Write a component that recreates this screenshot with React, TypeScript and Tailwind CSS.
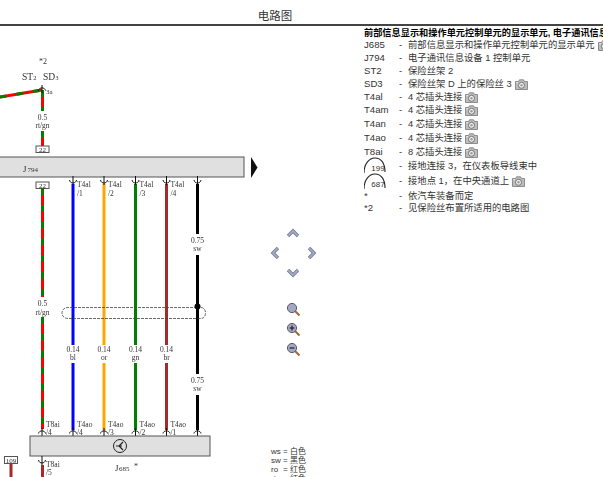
import React from "react";

const Camera = () => (
  <svg width="13" height="11" viewBox="0 0 13 11" className="inline-block ml-[3px] shrink-0">
    <path d="M0.5 2.5H3.5L4.5 0.8H8.5L9.5 2.5H12.5V10.5H0.5Z" fill="#bdbdbd" stroke="#777" strokeWidth="0.8" />
    <rect x="1.2" y="3.2" width="1.8" height="1" fill="#eee" />
    <circle cx="6.5" cy="6.3" r="3" fill="#f2f2f2" stroke="#666" strokeWidth="0.9" />
    <circle cx="6.5" cy="6.3" r="1.2" fill="#999" />
  </svg>
);

type Row = { label: React.ReactNode; text: string; cam?: boolean; h: string };

const Ground = ({ n }: { n: string }) => (
  <svg width="24" height="24" viewBox="0 0 24 24" className="overflow-visible block">
    <path d="M0 20C0 11 5 5 11 5C17 5 21 10 21 19" fill="none" stroke="#222" strokeWidth="1.1" />
    <text x="14" y="18" textAnchor="middle" fontSize="8" fill="#333" fontFamily="'Liberation Sans',sans-serif">{n}</text>
  </svg>
);

const rows: Row[] = [
  { label: "J685", text: "前部信息显示和操作单元控制单元的显示单元", cam: true, h: "h-[14px]" },
  { label: "J794", text: "电子通讯信息设备 1 控制单元", h: "h-[13px]" },
  { label: "ST2", text: "保险丝架 2", h: "h-[13px]" },
  { label: "SD3", text: "保险丝架 D 上的保险丝 3", cam: true, h: "h-[13px]" },
  { label: "T4al", text: "4 芯插头连接", cam: true, h: "h-[13px]" },
  { label: "T4am", text: "4 芯插头连接", cam: true, h: "h-[13px]" },
  { label: "T4an", text: "4 芯插头连接", cam: true, h: "h-[14px]" },
  { label: "T4ao", text: "4 芯插头连接", cam: true, h: "h-[14px]" },
  { label: "T8ai", text: "8 芯插头连接", cam: true, h: "h-[14px]" },
  { label: <Ground n="199" />, text: "接地连接 3，在仪表板导线束中", h: "h-[14px]" },
  { label: <Ground n="687" />, text: "接地点 1，在中央通道上", cam: true, h: "h-[17px]" },
  { label: "*", text: "依汽车装备而定", h: "h-[12px]" },
  { label: "*2", text: "见保险丝布置所适用的电路图", h: "h-[12px]" },
];

const Fork = ({ x, y }: { x: number; y: number }) => (
  <g fill="none" stroke="#111" strokeWidth="1">
    <path d={`M${x} ${y - 4}V${y + 4}`} />
    <path d={`M${x - 3.5} ${y + 1.5}C${x - 3} ${y - 2} ${x + 3} ${y - 2} ${x + 3.5} ${y + 1.5}`} />
  </g>
);
const ForkDown = ({ x, y }: { x: number; y: number }) => (
  <g fill="none" stroke="#111" strokeWidth="1">
    <path d={`M${x} ${y - 5}V${y + 4}`} />
    <path d={`M${x - 3.5} ${y - 1}C${x - 3} ${y + 3} ${x + 3} ${y + 3} ${x + 3.5} ${y - 1}`} />
  </g>
);

const Striped = ({ d }: { d: string }) => (
  <>
    <path d={d} stroke="#ff0000" strokeWidth="3" fill="none" />
    <path d={d} stroke="#008000" strokeWidth="3" fill="none" strokeDasharray="6.7 10" />
  </>
);

const Label = ({ x, y, children, anchor = "middle", size = 8 }: { x: number; y: number; children: React.ReactNode; anchor?: "middle" | "start"; size?: number }) => (
  <text x={x} y={y} textAnchor={anchor} fontSize={size} fill="#333" fontFamily="'Liberation Serif',serif">{children}</text>
);

const Conn = ({ x, y, n }: { x: number; y: number; n: string }) => (
  <g>
    <rect x={x - 6.5} y={y} width="13" height="6.5" fill="#fff" stroke="#555" strokeWidth="1" />
    <Label x={x} y={y + 6} size={7}>{n}</Label>
  </g>
);

const Diagram = () => {
  const wires = [
    { x: 73, c: "#0000ff", t: "bl", top: "T4al", tn: "/1", bot: "T4ao", bn: "/4" },
    { x: 104, c: "#ffa500", t: "or", top: "T4al", tn: "/2", bot: "T4ao", bn: "/3" },
    { x: 135.5, c: "#008000", t: "gn", top: "T4al", tn: "/3", bot: "T4ao", bn: "/2" },
    { x: 166.5, c: "#a52a2a", t: "br", top: "T4al", tn: "/4", bot: "T4ao", bn: "/1" },
  ];
  return (
    <svg width="262" height="451" viewBox="0 26 262 451" className="block shrink-0 [will-change:transform]">
      <Label x={43} y={64} size={8}>*2</Label>
      <Label x={22} y={80} anchor="start" size={9.5}>ST</Label>
      <Label x={33.2} y={80} anchor="start" size={6.5}>2</Label>
      <Label x={43} y={80} anchor="start" size={9.5}>SD</Label>
      <Label x={55.5} y={80} anchor="start" size={6}>3</Label>
      <Striped d="M0 97L42 90" />
      <Striped d="M42.5 90V111" />
      <Fork x={42} y={89} />
      <Label x={46} y={94} anchor="start" size={7}>3a</Label>
      <Label x={42.5} y={120} size={7.5}>0.5</Label>
      <Label x={42.5} y={128} size={7.5}>rt/gn</Label>
      <Striped d="M42.5 131V146" />
      <Conn x={42.5} y={146} n="22" />
      <rect x="-2" y="157" width="246" height="20" fill="#e0e0e0" stroke="#555" strokeWidth="1" />
      <Label x={23} y={172} anchor="start" size={9}>J</Label>
      <Label x={27.5} y={172} anchor="start" size={7}>794</Label>
      <path d="M251 157L257.5 167.5L251 178Z" fill="#111" />
      <Conn x={42.5} y={182} n="22" />
      <Striped d="M42.5 188.5V297" />
      <Label x={42.5} y={306} size={7.5}>0.5</Label>
      <Label x={42.5} y={315} size={7.5}>rt/gn</Label>
      <Striped d="M42.5 317V429" />
      {wires.map((w) => (
        <g key={w.x}>
          <path d={`M${w.x} 184V345`} stroke={w.c} strokeWidth="3" />
          <path d={`M${w.x} 363V430`} stroke={w.c} strokeWidth="3" />
          <Label x={w.x + 4} y={187} anchor="start" size={7.5}>{w.top}</Label>
          <Label x={w.x + 4} y={196} anchor="start" size={7.5}>{w.tn}</Label>
          <Label x={w.x} y={352} size={7.5}>0.14</Label>
          <Label x={w.x} y={360} size={7.5}>{w.t}</Label>
          <Label x={w.x + 4} y={427} anchor="start" size={7.5}>{w.bot}</Label>
          <Label x={w.x + 4} y={435} anchor="start" size={7.5}>{w.bn}</Label>
          <ForkDown x={w.x} y={181} />
          <Fork x={w.x} y={432} />
        </g>
      ))}
      <path d="M197.5 184V234M197.5 255V374M197.5 395V430" stroke="#000" strokeWidth="3" fill="none" />
      <ForkDown x={197.5} y={181} />
      <Fork x={197.5} y={432} />
      <Label x={197.5} y={243} size={7.5}>0.75</Label>
      <Label x={197.5} y={251} size={7.5}>sw</Label>
      <Label x={197.5} y={383} size={7.5}>0.75</Label>
      <Label x={197.5} y={391} size={7.5}>sw</Label>
      <path d="M69 307.5H68C60 307.5 60 318.5 68 318.5H197M197 307.5H69M197 307.5H201C207 307.5 207 318.5 201 318.5H197" fill="none" stroke="#444" strokeWidth="0.8" strokeDasharray="3 1" />
      <circle cx="197.5" cy="306.5" r="3" fill="#000" />
      <Label x={46} y={427} anchor="start" size={7.5}>T8ai</Label>
      <Label x={46} y={435} anchor="start" size={7.5}>/4</Label>
      <Fork x={42} y={432} />
      <rect x="30" y="436" width="180" height="20" fill="#e0e0e0" stroke="#555" strokeWidth="1" />
      <circle cx="120" cy="446" r="6.5" fill="none" stroke="#222" strokeWidth="1" />
      <path d="M116 446H122M123 442L119 446L123 450" fill="none" stroke="#222" strokeWidth="1.2" />
      <ForkDown x={42} y={461} />
      <path d="M42.5 465V477" stroke="#a52a2a" strokeWidth="3" />
      <Label x={46} y={467} anchor="start" size={7.5}>T8ai</Label>
      <Label x={46} y={475} anchor="start" size={7.5}>/5</Label>
      <Label x={115} y={471} anchor="start" size={9}>J</Label>
      <Label x={119} y={471} anchor="start" size={7}>685</Label>
      <Label x={136} y={469} size={8}>*</Label>
      <rect x="4.5" y="456.5" width="13" height="7" fill="#fff" stroke="#555" strokeWidth="1" />
      <Label x={11} y={463} size={7}>109</Label>
      <path d="M11 464V477" stroke="#a52a2a" strokeWidth="3" />
    </svg>
  );
};

const Chevron = ({ rot }: { rot: number }) => (
  <svg width="14" height="10" viewBox="0 0 14 10" style={{ transform: `rotate(${rot}deg)` }} className="block">
    <path d="M2 8L7 3L12 8" fill="none" stroke="#777c98" strokeWidth="3.4" />
    <path d="M2.4 7.6L7 3L11.6 7.6" fill="none" stroke="#a9acc4" strokeWidth="1.6" />
  </svg>
);

const Lens = ({ mark }: { mark?: "plus" | "minus" }) => (
  <svg width="15" height="15" viewBox="0 0 15 15" className="block">
    <path d="M9 9L13.5 13.5" stroke="#9a6a3a" strokeWidth="2" />
    <circle cx="6" cy="6" r="4.6" fill="#a4a7c0" stroke="#555a70" strokeWidth="1" />
    {mark && <path d="M3.6 6H8.4" stroke="#222" strokeWidth="1.2" />}
    {mark === "plus" && <path d="M6 3.6V8.4" stroke="#222" strokeWidth="1.2" />}
  </svg>
);

const legend = [
  ["ws", "白色"],
  ["sw", "黑色"],
  ["ro", "红色"],
  ["rt", "红色"],
];

export default function App() {
  return (
    <div className="w-[603px] h-[477px] overflow-hidden bg-white font-['Liberation_Sans','Noto_Sans_CJK_SC',sans-serif] text-[#333]">
      <header className="h-[26px] w-full border-b-2 border-[#444]">
        <h1 className="w-[550px] pt-[9px] text-center text-[11.5px] leading-[14px] font-normal text-[#333]">电路图</h1>
      </header>
      <div className="flex h-[451px]">
        <Diagram />
        <div className="w-[102px] shrink-0 flex flex-col">
          <div className="shrink-0 ml-[4px] w-[55px] mt-[197px] grid grid-cols-3 grid-rows-3 h-[60px] place-items-center">
            <div className="col-start-2 row-start-1"><Chevron rot={0} /></div>
            <div className="col-start-1 row-start-2"><Chevron rot={-90} /></div>
            <div className="col-start-3 row-start-2"><Chevron rot={90} /></div>
            <div className="col-start-2 row-start-3"><Chevron rot={180} /></div>
          </div>
          <div className="shrink-0 ml-[24px] mt-[19px] flex flex-col gap-[5px]">
            <Lens />
            <Lens mark="plus" />
            <Lens mark="minus" />
          </div>
          <div className="shrink-0 ml-[9px] mt-[90px] text-[8px] leading-[9px] text-[#333]">
            {legend.map(([a, b]) => (
              <div key={a} className="flex">
                <span className="w-[12px]">{a}</span>
                <span>= {b}</span>
              </div>
            ))}
          </div>
        </div>
        <div className="flex-1 min-w-0 overflow-hidden pt-[1px] text-[9.33px] leading-[13px]">
          <div className="font-bold whitespace-nowrap text-black h-[11px] leading-[12px] text-[9.2px]">前部信息显示和操作单元控制单元的显示单元, 电子通讯信息设备</div>
          {rows.map((r, i) => (
            <div key={i} className={`flex items-center whitespace-nowrap ${r.h}`}>
              <span className="w-[35px] shrink-0 text-[9.6px] pb-[2px]">{r.label}</span>
              <span className="w-[9px] shrink-0">-</span>
              <span className="flex items-center">{r.text}{r.cam && <Camera />}</span>
            </div>
          ))}
        </div>
      </div>
    </div>
  );
}
